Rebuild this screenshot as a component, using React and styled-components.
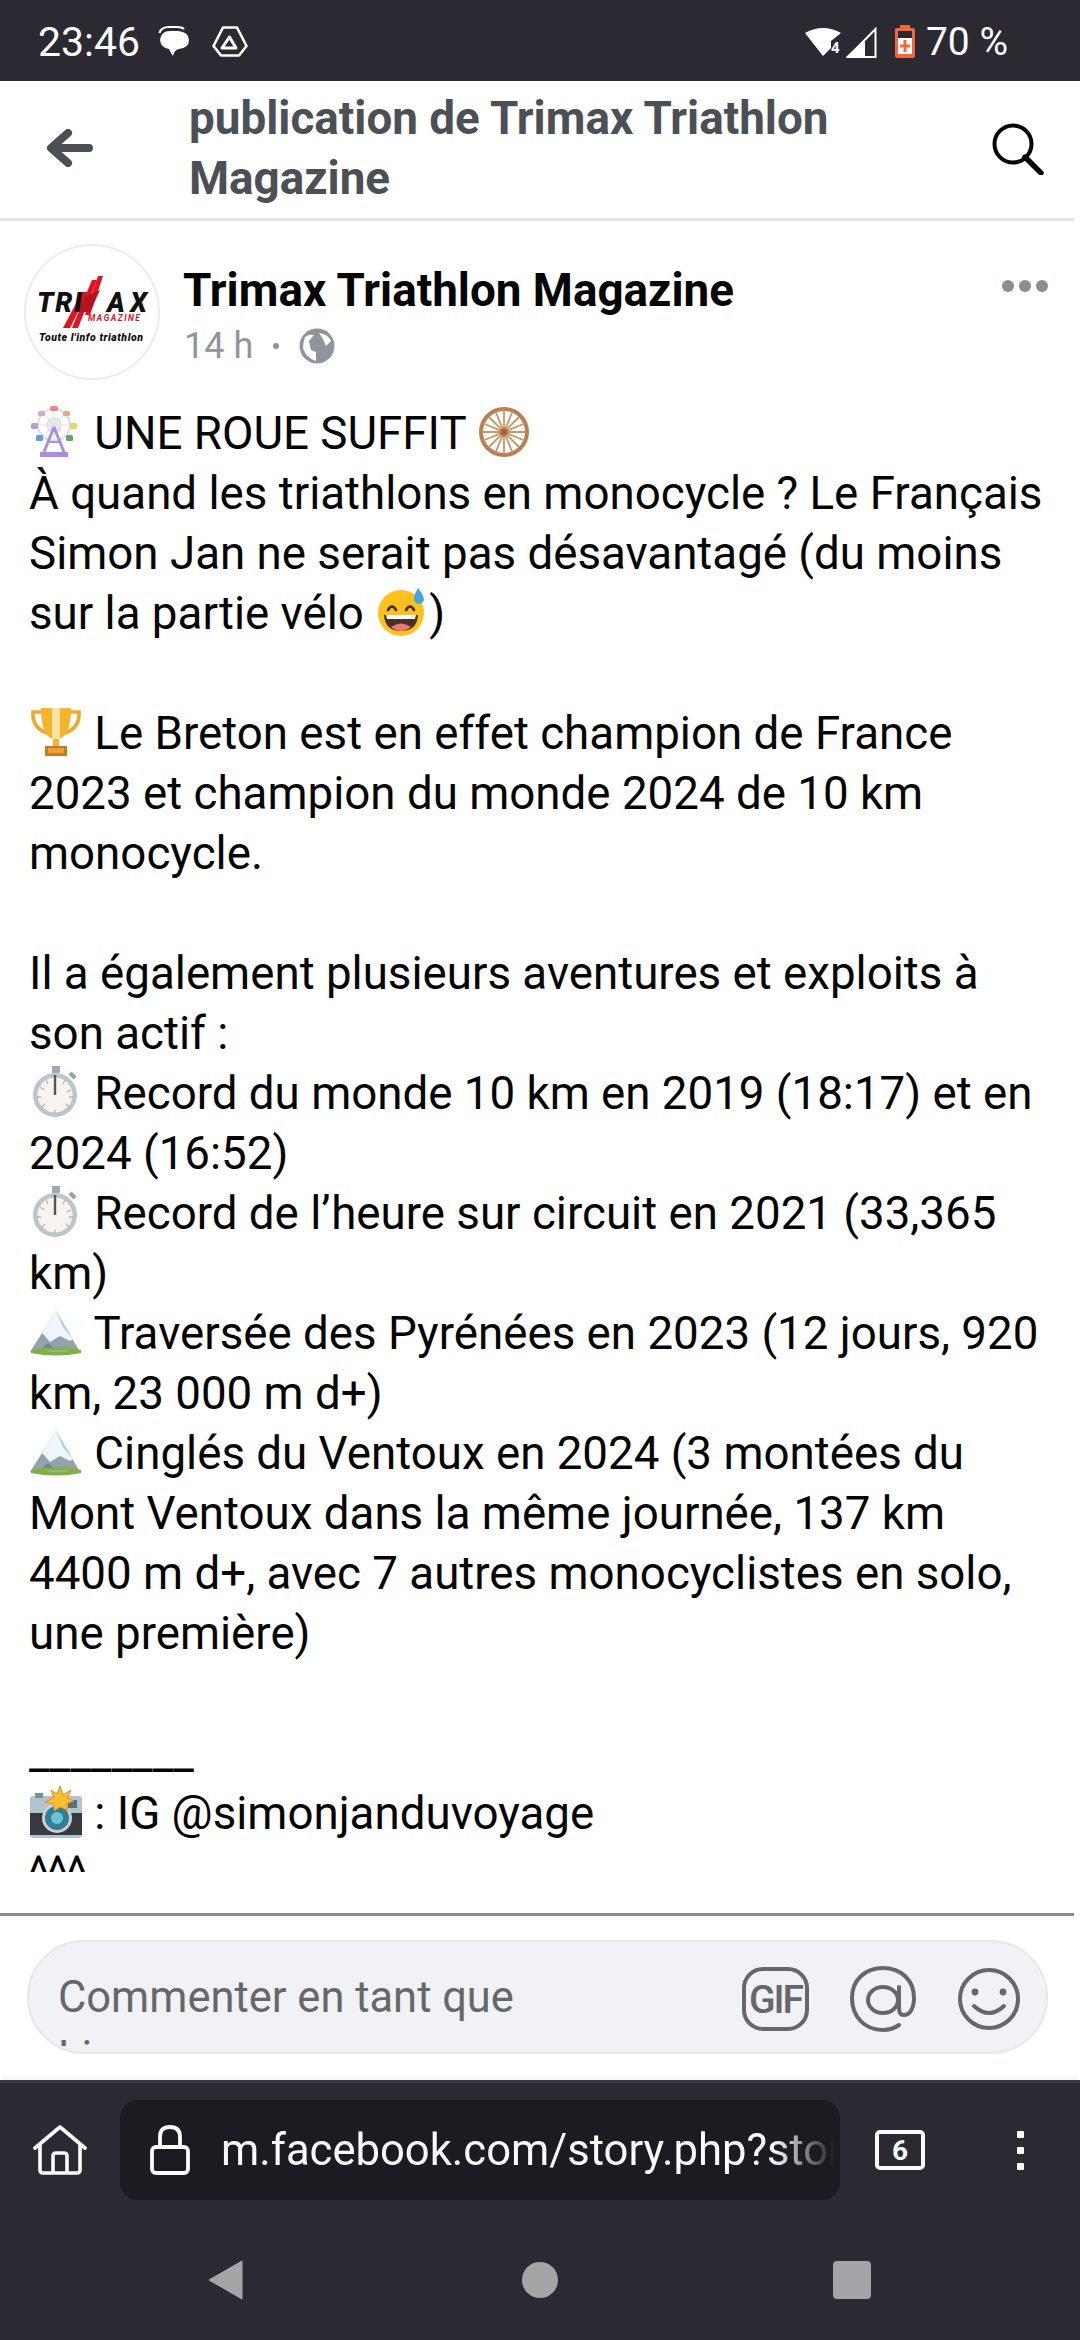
import React from "react";
import styled, { createGlobalStyle } from "styled-components";

const Global = createGlobalStyle`
  html, body { margin: 0; padding: 0; background: #fff; }
  * { box-sizing: border-box; }
`;

const Page = styled.div`
  width: 1080px; height: 2340px; overflow: hidden; display: flex; flex-direction: column;
  font-family: Roboto, "Liberation Sans", sans-serif; background: #fff;
`;
const StatusBar = styled.div`
  height: 81px; flex: none; background: #2b2a33; color: #fff; display: flex; align-items: center;
  justify-content: space-between; padding: 2px 72px 0 38px;
`;
const StatusGroup = styled.div`display: flex; align-items: center;`;
const Slot = styled.span`display: flex; margin-left: ${p => p.$ml || 0}px;`;
const Clock = styled.span`font-size: 41px; margin-right: 18px;`;
const Level = styled.span`font-size: 39px; margin-left: 11px;`;
const HeaderBar = styled.header`
  height: 140px; flex: none; display: flex; align-items: center; margin-right: 6px; padding: 0 30px 0 46px;
  border-bottom: 3px solid #e4e4e4;
`;
const BackWrap = styled.div`width: 143px; flex: none; display: flex; align-items: center; margin-top: -3px;`;
const Title = styled.h1`
  margin: -2px 0 0; flex: 1; max-width: 720px; font-size: 45.8px; line-height: 60px; font-weight: 700; color: #4b4f56;
`;
const SearchWrap = styled.div`margin-left: auto; display: flex; margin-top: -2px;`;
const Post = styled.main`flex: 1; min-height: 0; overflow: hidden; padding-top: 23px;`;
const PostHead = styled.div`display: flex; height: 160px; padding: 0 24px; position: relative;`;
const Avatar = styled.div`
  width: 136px; height: 136px; border-radius: 50%; border: 2px solid #ececec; flex: none; overflow: hidden; background: #fff;
`;
const Meta = styled.div`margin-left: 23px; padding-top: 17px;`;
const Name = styled.div`font-size: 45.8px; line-height: 60px; font-weight: 700; color: #050505;`;
const Sub = styled.div`display: flex; align-items: center; font-size: 36px; line-height: 44px; color: #90949c; margin-top: 3px; padding-left: 1px;`;
const Dot = styled.span`width: 6px; height: 6px; border-radius: 50%; background: #90949c; margin: 0 20px;`;
const More = styled.div`position: absolute; right: 32px; top: 36px; display: flex; gap: 5px;`;
const MoreDot = styled.span`width: 12px; height: 12px; border-radius: 50%; background: #8a8d91;`;
const Body = styled.div`
  padding: 0 30px 0 29px; font-size: 45.7px; line-height: 60px; color: #050505; white-space: pre-line;
`;
const Moji = styled.svg`
  display: inline-block; width: 52px; height: 52px; margin: 0 1px; vertical-align: -9px;
`;
const FootRule = styled.div`height: 3px; flex: none; margin-right: 6px; background: #8b8b8b;`;
const ComposerArea = styled.div`height: 164px; flex: none; padding: 24px 32px 0 27px;`;
const Composer = styled.div`
  height: 114px; border-radius: 57px; background: #f0f2f5; border: 2px solid #e6e7ea; display: flex; padding: 26px 26px 0 29px;
`;
const Placeholder = styled.div`
  flex: 1; min-width: 0; max-width: 490px; height: 78px; overflow: hidden; font-size: 43.5px; line-height: 60px; color: #65676b;
`;
const ComposerIcons = styled.div`display: flex; align-items: center; gap: 41px; margin-left: auto; margin-top: -2px; height: 66px;`;
const BrowserBar = styled.div`
  height: 260px; flex: none; background: #2b2a33; border-top: 3px solid #3a3944; box-shadow: 0 -3px 4px rgba(0,0,0,.04);
  display: flex; flex-direction: column;
`;
const UrlRow = styled.div`display: flex; align-items: center; height: 137px; padding: 0 0 3px 33px;`;
const HomeWrap = styled.div`width: 87px; flex: none; display: flex;`;
const UrlPill = styled.div`
  width: 720px; height: 100px; background: #1c1b22; border-radius: 18px; display: flex; align-items: center; padding: 0 5px 0 30px; flex: none;
`;
const UrlText = styled.div`
  margin-left: 31px; flex: 1; min-width: 0; overflow: hidden; white-space: nowrap; font-size: 43.6px; color: #fbfbfe;
  -webkit-mask-image: linear-gradient(to right, #000 90%, transparent 100%);
  mask-image: linear-gradient(to right, #000 90%, transparent 100%);
`;
const TabBox = styled.div`
  width: 50px; height: 40px; margin-left: 35px; border: 4px solid #fbfbfe; border-radius: 5px; color: #fbfbfe; font-size: 28px; font-weight: 700;
  display: flex; align-items: center; justify-content: center;
`;
const Kebab = styled.div`margin-left: 92px; display: flex; flex-direction: column; gap: 9px;`;
const KebabDot = styled.span`width: 7px; height: 7px; background: #fbfbfe; border-radius: 1px;`;
const NavRow = styled.div`flex: 1; display: flex; align-items: flex-start; padding: 40px 0 0 208px;`;
const NavTri = styled.svg`width: 35px; height: 40px; flex: none;`;
const NavCircle = styled.span`width: 36px; height: 36px; border-radius: 50%; background: #a5a5a8; margin: 2px 0 0 279px; flex: none;`;
const NavSquare = styled.span`width: 38px; height: 38px; border-radius: 4px; background: #a5a5a8; margin: 1px 0 0 275px; flex: none;`;

const Ferris = () => (
  <Moji viewBox="0 0 52 52" aria-hidden="true">
    <circle cx="24" cy="19" r="16" fill="none" stroke="#dcdee1" strokeWidth="2"/>
    <circle cx="24" cy="19" r="7" fill="#eceded" stroke="#d2d4d8"/>
    <g stroke="#e0e1e4" strokeWidth="1">
      <path d="M24 3V35M8 19H40M13 8L35 30M35 8L13 30"/>
    </g>
    <rect x="20" y="0" width="8" height="5" rx="1.5" fill="#e98a8a"/>
    <rect x="33" y="5" width="7" height="5" rx="1.5" fill="#e8a58f"/>
    <rect x="8" y="5" width="7" height="5" rx="1.5" fill="#dba6cc"/>
    <rect x="40" y="17" width="7" height="6" rx="1.5" fill="#f2cf63"/>
    <rect x="1" y="17" width="7" height="6" rx="1.5" fill="#b39ddb"/>
    <rect x="36" y="29" width="7" height="6" rx="1.5" fill="#66a86a"/>
    <rect x="6" y="29" width="7" height="6" rx="1.5" fill="#5a9fe0"/>
    <path d="M24 21L14 46M24 21L34 46" stroke="#a98fe3" strokeWidth="3"/>
    <path d="M10 46H38V51H10Z" fill="#a88ce6"/>
    <path d="M18 36H30" stroke="#a98fe3" strokeWidth="2"/>
  </Moji>
);
const Wheel = () => (
  <Moji viewBox="0 0 52 52" aria-hidden="true">
    <circle cx="26" cy="26" r="23" fill="none" stroke="#bb8052" strokeWidth="4"/>
    <g stroke="#c79568" strokeWidth="1.8">
      <path d="M26 4V48M4 26H48M11 11L41 41M41 11L11 41M17.5 5.5L34.5 46.5M34.5 5.5L17.5 46.5M5.5 17.5L46.5 34.5M5.5 34.5L46.5 17.5"/>
    </g>
    <circle cx="26" cy="26" r="3.5" fill="#a4653a"/>
  </Moji>
);
const Sweat = () => (
  <Moji viewBox="0 0 52 52" aria-hidden="true">
    <circle cx="25" cy="27" r="23" fill="#fcc21b"/>
    <path d="M12 24Q16 17 20 24M30 24Q34 17 38 24" fill="none" stroke="#3d2b1a" strokeWidth="2.6" strokeLinecap="round"/>
    <path d="M8 29H42Q41 45 25 45Q9 45 8 29Z" fill="#4a2f27"/>
    <path d="M10 29H40L39 33H11Z" fill="#fff"/>
    <path d="M15 41Q25 34 35 41Q30 45 25 45Q20 45 15 41Z" fill="#e57a7a"/>
    <path d="M42 2Q50 12 47 16Q43 20 39 16Q36 12 42 2Z" fill="#42a5e0"/>
  </Moji>
);
const Trophy = () => (
  <Moji viewBox="0 0 52 52" aria-hidden="true">
    <path d="M13 6H3Q2 22 17 27M39 6H49Q50 22 35 27" fill="none" stroke="#f4a62a" strokeWidth="3.6"/>
    <path d="M11 2H41Q41 30 29 33V40H23V33Q11 30 11 2Z" fill="#f7b32b"/>
    <path d="M22 2H30V33H22Z" fill="#fde3a0"/>
    <path d="M15 40H37V50H15Z" fill="#c87a22"/>
    <path d="M18 42H34V47H18Z" fill="#e8a33a"/>
  </Moji>
);
const Watch = () => (
  <Moji viewBox="0 0 52 52" aria-hidden="true">
    <rect x="22" y="0" width="8" height="7" fill="#a3aaaf"/>
    <path d="M40 7L45 12" stroke="#90a4ae" strokeWidth="4"/>
    <circle cx="25" cy="29" r="22" fill="#b9c6cc"/>
    <circle cx="25" cy="29" r="17.5" fill="#f7f4ef"/>
    <g stroke="#e0a098" strokeWidth="1.3">
      <path d="M35 14L33 18M41 24L37 26M43 31H39M39 41L36 38M25 47V44M12 41L15 38M7 31H11M10 21L14 24M16 14L18 18"/>
    </g>
    <path d="M25 9V29" stroke="#555" strokeWidth="2.4"/>
  </Moji>
);
const Mountain = () => (
  <Moji viewBox="0 0 52 52" aria-hidden="true">
    <path d="M0 46L26 5L50 46Z" fill="#90a4ae"/>
    <path d="M26 5L12 27L20 36L30 30L40 35L43 33Z" fill="#eef6fb"/>
    <path d="M26 5L33 21L43 33Z" fill="#9ccbeb"/>
    <path d="M8 46L18 37L28 46Z" fill="#78808a"/>
    <path d="M30 44L38 36L46 44Z" fill="#9e9e9e"/>
    <path d="M1 44Q26 38 51 44V47Q26 52 1 47Z" fill="#7cb342"/>
    <path d="M16 44H38L36 46H20Z" fill="#aaa89a"/>
  </Moji>
);
const Camera = () => (
  <Moji viewBox="0 0 52 52" aria-hidden="true">
    <rect x="0" y="10" width="52" height="42" rx="3" fill="#b0c4ce"/>
    <rect x="0" y="27" width="52" height="22" fill="#37393c"/>
    <rect x="5" y="7" width="8" height="5" fill="#78909c"/>
    <rect x="38" y="14" width="9" height="8" fill="#546e7a"/>
    <circle cx="27" cy="32" r="15" fill="#cfcfcf"/>
    <circle cx="27" cy="32" r="12" fill="#2f7f99"/>
    <circle cx="27" cy="32" r="6" fill="#6cc3d8"/>
    <path d="M30 0L33 9L41 4L37 12L44 15L36 18L38 24L30 21L24 25L24 18L15 16L24 12L21 4L27 8Z" fill="#fbc02d" stroke="#ef8b1e" strokeWidth="1"/>
  </Moji>
);

const BackArrow = () => (
  <svg width="47" height="38" viewBox="0 0 47 38" aria-hidden="true">
    <path d="M22 4L5 19L22 34" fill="none" stroke="#4b4f56" strokeWidth="8" strokeLinecap="round" strokeLinejoin="round"/>
    <path d="M8 19H43" stroke="#4b4f56" strokeWidth="8" strokeLinecap="round"/>
  </svg>
);
const SearchIcon = () => (
  <svg width="52" height="52" viewBox="0 0 52 52" aria-hidden="true">
    <circle cx="21" cy="21" r="18.5" fill="none" stroke="#050505" strokeWidth="4"/>
    <path d="M33 34L49 50" stroke="#050505" strokeWidth="5.4" strokeLinecap="round"/>
  </svg>
);
const Globe = () => (
  <svg width="36" height="36" viewBox="0 0 36 36" aria-hidden="true">
    <circle cx="18" cy="18" r="17.5" fill="#90949c"/>
    <path d="M6 9Q10 6 15 7L10 13L12 22L17 24L17 33Q7 30 4 20Q4 14 6 9Z" fill="#fff"/>
    <path d="M20 5Q29 6 32 13L27 18L24 11Z" fill="#fff"/>
  </svg>
);
const Logo = () => (
  <svg width="132" height="132" viewBox="0 0 132 132" aria-hidden="true">
    <g fill="#e2121f">
      <path d="M37 82L56 46H62L44 82Z"/>
      <path d="M46 82L66 34H71L52 82Z"/>
      <path d="M59 69L72 30H77L64 69Z"/>
      <path d="M50 66L60 50L74 44L64 66Z" fill="#b3141d"/>
    </g>
    <text x="11" y="66" fontFamily="Roboto, sans-serif" fontWeight="900" fontStyle="italic" fontSize="27" fill="#111" textLength="45">TRI</text>
    <text x="81" y="66" fontFamily="Roboto, sans-serif" fontWeight="900" fontStyle="italic" fontSize="27" fill="#111" textLength="40">AX</text>
    <text x="62" y="75" fontFamily="Roboto, sans-serif" fontWeight="700" fontStyle="italic" fontSize="8.5" fill="#e2121f" textLength="52">MAGAZINE</text>
    <text x="13" y="95" fontFamily="Roboto, sans-serif" fontWeight="900" fontStyle="italic" fontSize="10.5" fill="#111" textLength="104">Toute l'info triathlon</text>
  </svg>
);
const SmsIcon = () => (
  <svg width="32" height="31" viewBox="0 0 32 31" aria-hidden="true">
    <path d="M1.5 7Q3 1 11 1H19Q24 1 26 3" fill="none" stroke="#fff" strokeWidth="2"/>
    <path d="M2 14Q3 5 12 5H20Q31 6 31 14Q31 22 21 23Q16 24 15 30Q12 26 11 23Q3 22 2 14Z" fill="#fff"/>
  </svg>
);
const HexIcon = () => (
  <svg width="36" height="31" viewBox="0 0 36 31" aria-hidden="true">
    <path d="M11 1.5H25L34.5 20L27 29.5H9L1.5 20Z" fill="none" stroke="#fff" strokeWidth="2.6" strokeLinejoin="round"/>
    <path d="M17.5 11L24 22H10Z" fill="none" stroke="#fff" strokeWidth="3" strokeLinejoin="round"/>
  </svg>
);
const WifiIcon = () => (
  <svg width="36" height="30" viewBox="0 0 36 30" aria-hidden="true">
    <path d="M0 6Q9 1 18 1Q27 1 36 6L26 14V21L18 29Z" fill="#fff"/>
    <text x="26" y="26" fontFamily="Roboto, sans-serif" fontSize="15" fontWeight="700" fill="#fff">4</text>
  </svg>
);
const SignalIcon = () => (
  <svg width="32" height="32" viewBox="0 0 32 32" aria-hidden="true">
    <path d="M30.5 3V31H3Z" fill="none" stroke="#fff" strokeWidth="2"/>
    <path d="M20 13V31H1Z" fill="#fff"/>
  </svg>
);
const BatteryIcon = () => (
  <svg width="20" height="33" viewBox="0 0 20 33" aria-hidden="true">
    <rect x="5" y="0" width="10" height="4" fill="#f0693a"/>
    <rect x="0" y="3" width="20" height="30" rx="2" fill="#f0693a"/>
    <rect x="3" y="6" width="14" height="7" fill="#2b2a33"/>
    <rect x="3" y="13" width="14" height="16" fill="#fff"/>
    <path d="M10 15V27M5 21H15" stroke="#f0693a" strokeWidth="3"/>
  </svg>
);
const GifIcon = () => (
  <svg width="67" height="64" viewBox="0 0 67 64" aria-hidden="true">
    <rect x="2" y="2" width="63" height="60" rx="19" fill="none" stroke="#65676b" strokeWidth="4"/>
    <text x="33.5" y="46" textAnchor="middle" fontFamily="Roboto, sans-serif" fontSize="39" fontWeight="500" letterSpacing="-2" fill="#65676b">GIF</text>
  </svg>
);
const AtIcon = () => (
  <svg width="67" height="66" viewBox="0 0 67 66" aria-hidden="true">
    <ellipse cx="33" cy="34" rx="15" ry="13" fill="none" stroke="#65676b" strokeWidth="4"/>
    <path d="M49 59Q42 64 33 64C14 64 2 50 2 32C2 14 15 2 33 2C51 2 64 14 64 32C64 42 60 49 54 49C49 49 49 45 49 40V21" fill="none" stroke="#65676b" strokeWidth="4" strokeLinecap="round"/>
  </svg>
);
const SmileIcon = () => (
  <svg width="62" height="62" viewBox="0 0 62 62" aria-hidden="true">
    <circle cx="31" cy="31" r="29" fill="none" stroke="#65676b" strokeWidth="4"/>
    <circle cx="17" cy="24" r="3.4" fill="#65676b"/>
    <circle cx="45" cy="24" r="3.4" fill="#65676b"/>
    <path d="M16 38Q31 52 46 38" fill="none" stroke="#65676b" strokeWidth="4" strokeLinecap="round"/>
  </svg>
);
const HomeIcon = () => (
  <svg width="54" height="50" viewBox="0 0 54 50" aria-hidden="true">
    <path d="M2 23L27 2L52 23" fill="none" stroke="#fbfbfe" strokeWidth="3.6" strokeLinecap="round" strokeLinejoin="round"/>
    <path d="M7 20V45Q7 48 10 48H44Q47 48 47 45V20" fill="none" stroke="#fbfbfe" strokeWidth="3.6"/>
    <path d="M20 48V31Q20 28 23 28H31Q34 28 34 31V48" fill="none" stroke="#fbfbfe" strokeWidth="3.6"/>
  </svg>
);
const LockIcon = () => (
  <svg width="40" height="50" viewBox="0 0 40 50" aria-hidden="true">
    <rect x="2" y="22" width="36" height="26" rx="4" fill="none" stroke="#fbfbfe" strokeWidth="3.8"/>
    <path d="M10 22V12Q10 2 20 2Q30 2 30 12V22" fill="none" stroke="#fbfbfe" strokeWidth="3.8"/>
  </svg>
);

export default function App() {
  return (
    <Page>
      <Global />
      <StatusBar>
        <StatusGroup>
          <Clock>23:46</Clock>
          <SmsIcon />
          <Slot $ml={22}><HexIcon /></Slot>
        </StatusGroup>
        <StatusGroup>
          <WifiIcon />
          <Slot $ml={4}><SignalIcon /></Slot>
          <Slot $ml={18}><BatteryIcon /></Slot>
          <Level>70 %</Level>
        </StatusGroup>
      </StatusBar>
      <HeaderBar>
        <BackWrap><BackArrow /></BackWrap>
        <Title>publication de Trimax Triathlon Magazine</Title>
        <SearchWrap><SearchIcon /></SearchWrap>
      </HeaderBar>
      <Post>
        <PostHead>
          <Avatar><Logo /></Avatar>
          <Meta>
            <Name>Trimax Triathlon Magazine</Name>
            <Sub>14 h<Dot /><Globe /></Sub>
          </Meta>
          <More><MoreDot /><MoreDot /><MoreDot /></More>
        </PostHead>
        <Body>
          <Ferris /> UNE ROUE SUFFIT <Wheel />{"\n"}
          À quand les triathlons en monocycle ? Le Français Simon Jan ne serait pas désavantagé (du moins sur la partie vélo <Sweat />){"\n\n"}
          <Trophy /> Le Breton est en effet champion de France 2023 et champion du monde 2024 de 10 km monocycle.{"\n\n"}
          Il a également plusieurs aventures et exploits à son actif :{"\n"}
          <Watch /> Record du monde 10 km en 2019 (18:17) et en 2024 (16:52){"\n"}
          <Watch /> Record de l’heure sur circuit en 2021 (33,365 km){"\n"}
          <Mountain /> Traversée des Pyrénées en 2023 (12 jours, 920 km, 23 000 m d+){"\n"}
          <Mountain /> Cinglés du Ventoux en 2024 (3 montées du Mont Ventoux dans la même journée, 137 km 4400 m d+, avec 7 autres monocyclistes en solo, une première){"\n\n"}
          ________{"\n"}
          <Camera /> : IG @simonjanduvoyage{"\n"}
          ^^^
        </Body>
      </Post>
      <FootRule />
      <ComposerArea>
        <Composer>
          <Placeholder>Commenter en tant que Lino</Placeholder>
          <ComposerIcons><GifIcon /><AtIcon /><SmileIcon /></ComposerIcons>
        </Composer>
      </ComposerArea>
      <BrowserBar>
        <UrlRow>
          <HomeWrap><HomeIcon /></HomeWrap>
          <UrlPill>
            <LockIcon />
            <UrlText>m.facebook.com/story.php?story_fbid</UrlText>
          </UrlPill>
          <TabBox>6</TabBox>
          <Kebab><KebabDot /><KebabDot /><KebabDot /></Kebab>
        </UrlRow>
        <NavRow>
          <NavTri viewBox="0 0 35 40" aria-hidden="true"><path d="M34 1V39L1 20Z" fill="#a5a5a8" stroke="#a5a5a8" strokeLinejoin="round"/></NavTri>
          <NavCircle />
          <NavSquare />
        </NavRow>
      </BrowserBar>
    </Page>
  );
}
